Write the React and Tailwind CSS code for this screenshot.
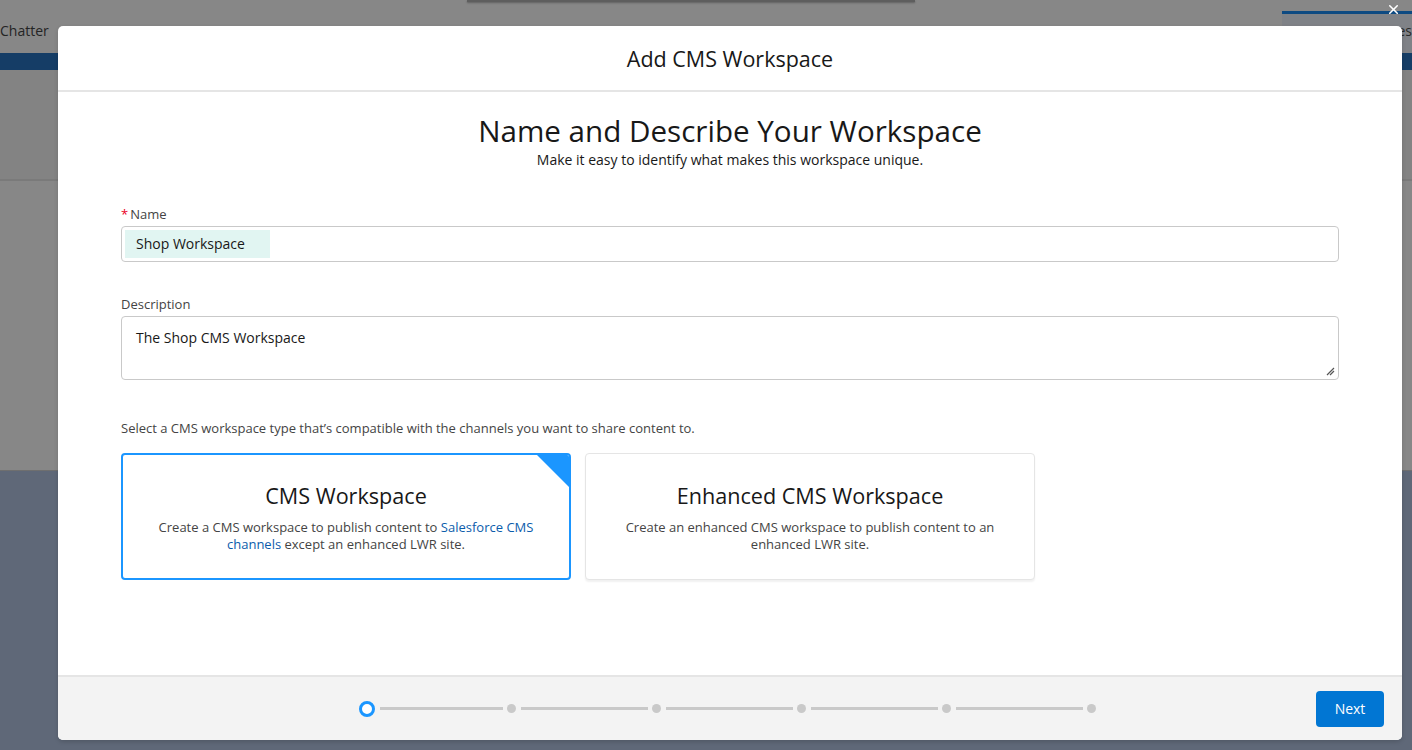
import { X } from "lucide-react";

const STEPS = 5;

function Progress() {
  return (
    <div className="flex items-center mr-[5px]">
      <span className="w-4 h-4 rounded-full border-[3px] border-[#1b96ff] bg-white flex-shrink-0" />
      {Array.from({ length: STEPS }).map((_, i) => (
        <div key={i} className="flex items-center">
          <span className={`h-[3px] bg-[#c9c9c9] ml-[5px] mr-[4px] ${i === 0 ? "w-[123px]" : "w-[127px]"}`} />
          <span className="w-[9px] h-[9px] rounded-full bg-[#c9c9c9]" />
        </div>
      ))}
    </div>
  );
}

function TypeCard({ title, selected, children }) {
  return (
    <div
      className={`relative w-[450px] h-[127px] rounded-[4px] bg-white flex flex-col items-center overflow-hidden ${
        selected
          ? "border-2 border-[#1b96ff]"
          : "border border-[#e5e5e5] shadow-[0_2px_2px_rgba(0,0,0,0.06)]"
      }`}>
      {selected && (
        <span className="absolute top-0 right-0 w-0 h-0 border-t-[32px] border-t-[#1b96ff] border-l-[32px] border-l-transparent" />
      )}
      <div className={`text-[21.6px] leading-[28px] text-[#181818] ${selected ? "mt-[27px]" : "mt-[28px]"}`}>{title}</div>
      <p className="mt-[9px] px-[28px] text-[13px] leading-[17px] text-[#444] text-center">{children}</p>
    </div>
  );
}

export default function App() {
  return (
    <div
      className="relative w-[1412px] h-[750px] overflow-hidden bg-[#878787] flex flex-col"
      style={{ fontFamily: '"Open Sans", "Noto Sans", sans-serif' }}>
      {/* page behind the overlay */}
      <div className="h-[53px] flex justify-between items-start">
        <span className="mt-[21px] text-[14px] leading-[20px] text-[#242424]">Chatter</span>
        <div className="w-[130px] h-[42px] mt-[11px] border-t-[3px] border-[#0d4a82] bg-[#7f8287] flex justify-end overflow-hidden">
          <span className="mt-[7px] text-[14px] leading-[20px] text-[#2a2a2a]">es</span>
        </div>
      </div>
      <div className="h-[17px] bg-[#153d66]" />
      <div className="h-[111px] bg-[#838383] border-b-2 border-[#7a7a7a]" />
      <div className="h-[290px] bg-[#878787] border-b border-[#6f6f6f]" />
      <div className="flex-1 bg-[#5f6878]" />
      <span className="absolute top-0 left-[467px] w-[448px] h-[2px] bg-[#5e5e5e] shadow-[0_1px_2px_rgba(0,0,0,0.3)]" />

      <button className="absolute top-[2px] right-[11px] text-white">
        <X size={15} strokeWidth={2.5} />
      </button>

      {/* modal */}
      <div className="absolute left-[58px] top-[26px] w-[1344px] h-[714px] bg-white rounded-[5px] shadow-[0_2px_4px_rgba(0,0,0,0.15)] flex flex-col overflow-hidden">
        <div className="h-[66px] flex-shrink-0 border-b-2 border-[#e5e5e5] flex items-center justify-center pt-[2px]">
          <h2 className="text-[21.5px] leading-[28px] text-[#181818]">Add CMS Workspace</h2>
        </div>

        <div className="flex-1 px-[63px]">
          <div className="mt-[20px] text-center">
            <h1 className="text-[29.6px] leading-[38px] text-[#181818]">Name and Describe Your Workspace</h1>
            <p className="text-[14px] leading-[20px] text-[#181818]">Make it easy to identify what makes this workspace unique.</p>
          </div>

          <div className="mt-[35px]">
            <label className="block text-[13px] leading-[18px] text-[#444]">
              <abbr className="text-[#ea001e] no-underline mr-[2px]">*</abbr>Name
            </label>
            <div className="mt-[3px] h-[36px] rounded-[4px] border border-[#c9c9c9] bg-white flex items-center pl-[3px]">
              <span className="h-[28px] w-[145px] bg-[#e1f5f2] pl-[11px] text-[14px] leading-[28px] text-[#181818]">Shop Workspace</span>
            </div>
          </div>

          <div className="mt-[33px]">
            <label className="block text-[13px] leading-[18px] text-[#444]">Description</label>
            <div className="relative mt-[3px] h-[64px] rounded-[4px] border border-[#c9c9c9] bg-white pl-[14px] pt-[8px]">
              <span className="text-[14px] leading-[20px] text-[#181818]">The Shop CMS Workspace</span>
              <svg className="absolute right-[3px] bottom-[3px]" width="10" height="10" viewBox="0 0 10 10">
                <path d="M9 2 L2 9 M9 5 L5 9" stroke="#555" strokeWidth="1.2" />
              </svg>
            </div>
          </div>

          <p className="mt-[38px] text-[13px] leading-[20px] text-[#444]">
            Select a CMS workspace type that’s compatible with the channels you want to share content to.
          </p>

          <div className="mt-[15px] flex gap-[14px]">
            <TypeCard title="CMS Workspace" selected>
              Create a CMS workspace to publish content to{" "}
              <a className="text-[#0b5cab]">Salesforce CMS channels</a> except an enhanced LWR site.
            </TypeCard>
            <TypeCard title="Enhanced CMS Workspace">
              Create an enhanced CMS workspace to publish content to an enhanced LWR site.
            </TypeCard>
          </div>
        </div>

        <div className="h-[65px] flex-shrink-0 border-t-2 border-[#e5e5e5] bg-[#f3f3f3] grid grid-cols-[1fr_auto_1fr] items-center">
          <div />
          <Progress />
          <div className="flex justify-end pr-[18px]">
            <button className="h-9 w-[68px] rounded-[4px] bg-[#0176d3] text-white text-[14px]">Next</button>
          </div>
        </div>
      </div>
    </div>
  );
}
